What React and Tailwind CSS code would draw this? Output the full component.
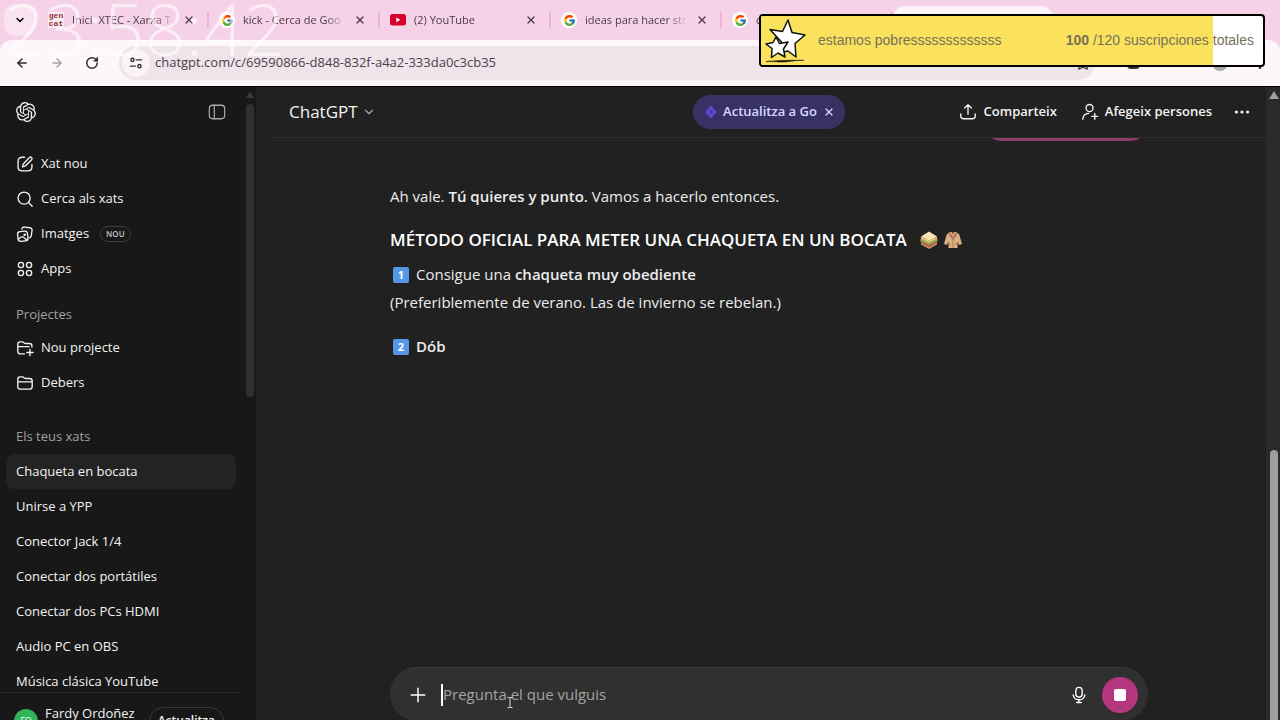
import { useState } from 'react';
import { ArrowLeft, ArrowRight, ChevronDown, MoreVertical, RotateCw, Star, X } from 'lucide-react';
import { FcGoogle } from 'react-icons/fc';

const TABS = [
  { id: 1, icon: 'gencat', title: 'Inici. XTEC - Xarxa T' },
  { id: 2, icon: 'google', title: 'kick - Cerca de Goo' },
  { id: 3, icon: 'youtube', title: '(2) YouTube' },
  { id: 4, icon: 'google', title: 'ideas para hacer str' },
  { id: 5, icon: 'google', title: 'c' },
];

const CHATS = [
  'Chaqueta en bocata',
  'Unirse a YPP',
  'Conector Jack 1/4',
  'Conectar dos portátiles',
  'Conectar dos PCs HDMI',
  'Audio PC en OBS',
  'Música clásica YouTube',
];

function Icon({ children, className = 'size-[18px]', strokeWidth = 1.5 }) {
  return (
    <svg
      viewBox="0 0 20 20"
      className={`shrink-0 ${className}`}
      fill="none"
      stroke="currentColor"
      strokeWidth={strokeWidth}
      strokeLinecap="round"
      strokeLinejoin="round"
      aria-hidden="true"
    >
      {children}
    </svg>
  );
}

const EditIcon = () => (
  <Icon>
    <path d="M9.5 2.5H7C4.3 2.5 2.3 4.3 2.3 7v6c0 2.7 1.9 4.7 4.7 4.7h6c2.7 0 4.7-2 4.7-4.7v-2.5" />
    <path d="M15 2.8a1.7 1.7 0 0 1 2.4 2.4L11.2 11.4a5 5 0 0 1-2 1.2l-2 .5.5-2a5 5 0 0 1 1.2-2z" />
  </Icon>
);

const SearchIcon = () => (
  <Icon>
    <circle cx="9" cy="9" r="6.7" />
    <path d="m14 14 4 4" />
  </Icon>
);

const ImagesIcon = () => (
  <Icon>
    <rect x="2" y="7" width="11" height="11" rx="3" transform="rotate(-6 7.5 12.5)" />
    <path d="M6.5 4.5c.3-1.6 1.6-2.4 3-2.2l6 .8c1.6.2 2.5 1.5 2.3 3l-.9 6c-.2 1.2-.9 2-2.1 2.2" />
    <path d="m3 15.5 2.6-2.2c.7-.6 1.5-.5 2.2 0l4.5 3.6" />
    <circle cx="9.6" cy="10.8" r=".7" fill="currentColor" />
  </Icon>
);

const AppsIcon = () => (
  <Icon>
    <circle cx="5.5" cy="5.5" r="2.9" />
    <circle cx="14.5" cy="5.5" r="2.9" />
    <circle cx="5.5" cy="14.5" r="2.9" />
    <circle cx="14.5" cy="14.5" r="2.9" />
  </Icon>
);

const NewFolderIcon = () => (
  <Icon>
    <path d="M9.5 16.5H5c-1.7 0-3-1.1-3-3V5.8C2 4.2 3 3.2 4.6 3.2h2.2c.7 0 1.3.2 1.8.7l.6.5c.5.4 1 .6 1.7.6H15c1.6 0 2.7 1 2.7 2.7v1.3M2 8.5h12.5M15.5 11.5v7M12 15h7" />
  </Icon>
);

const FolderIcon = () => (
  <Icon>
    <path d="M2 6c0-1.7 1-2.8 2.6-2.8h2.2c.7 0 1.3.2 1.8.7l.6.5c.5.4 1 .6 1.7.6H15c1.8 0 3 1 3 2.7v6.100c0 1.9-1.2 3-3 3H5c-1.8 0-3-1.1-3-3zM2 8.8h16" />
  </Icon>
);

const OpenAILogo = () => (
  <svg viewBox="0 0 24 24" className="size-5" fill="currentColor" aria-hidden="true">
    <path d="M22.2819 9.8211a5.9847 5.9847 0 0 0-.5157-4.9108 6.0462 6.0462 0 0 0-6.5098-2.9A6.0651 6.0651 0 0 0 4.9807 4.1818a5.9847 5.9847 0 0 0-3.9977 2.9 6.0462 6.0462 0 0 0 .7427 7.0966 5.98 5.98 0 0 0 .511 4.9107 6.051 6.051 0 0 0 6.5146 2.9001A5.9847 5.9847 0 0 0 13.2599 24a6.0557 6.0557 0 0 0 5.7718-4.2058 5.9894 5.9894 0 0 0 3.9977-2.9001 6.0557 6.0557 0 0 0-.7475-7.0729zm-9.022 12.6081a4.4755 4.4755 0 0 1-2.8764-1.0408l.1419-.0804 4.7783-2.7582a.7948.7948 0 0 0 .3927-.6813v-6.7369l2.02 1.1686a.071.071 0 0 1 .038.052v5.5826a4.504 4.504 0 0 1-4.4945 4.4944zm-9.6607-4.1254a4.4708 4.4708 0 0 1-.5346-3.0137l.142.0852 4.783 2.7582a.7712.7712 0 0 0 .7806 0l5.8428-3.3685v2.3324a.0804.0804 0 0 1-.0332.0615L9.74 19.9502a4.4992 4.4992 0 0 1-6.1408-1.6464zM2.3408 7.8956a4.485 4.485 0 0 1 2.3655-1.9728V11.6a.7664.7664 0 0 0 .3879.6765l5.8144 3.3543-2.0201 1.1685a.0757.0757 0 0 1-.071 0l-4.8303-2.7865A4.504 4.504 0 0 1 2.3408 7.872zm16.5963 3.8558L13.1038 8.364 15.1192 7.2a.0757.0757 0 0 1 .071 0l4.8303 2.7913a4.4944 4.4944 0 0 1-.6765 8.1042v-5.6772a.79.79 0 0 0-.407-.667zm2.0107-3.0231l-.142-.0852-4.7735-2.7818a.7759.7759 0 0 0-.7854 0L9.409 9.2297V6.8974a.0662.0662 0 0 1 .0284-.0615l4.8303-2.7866a4.4992 4.4992 0 0 1 6.6802 4.66zM8.3065 12.863l-2.02-1.1638a.0804.0804 0 0 1-.038-.0567V6.0742a4.4992 4.4992 0 0 1 7.3757-3.4537l-.142.0805L8.704 5.459a.7948.7948 0 0 0-.3927.6813zm1.0976-2.3654l2.602-1.4998 2.6069 1.4998v2.9994l-2.5974 1.4997-2.6067-1.4997Z" />
  </svg>
);

function Favicon({ icon }) {
  if (icon === 'youtube') {
    return (
      <svg viewBox="0 0 16 12" className="w-4 shrink-0" aria-hidden="true">
        <rect width="16" height="11.5" rx="2.5" fill="#d6002f" />
        <path d="M6.3 3.4v4.8l4-2.4z" fill="#fff" />
      </svg>
    );
  }
  if (icon === 'gencat') {
    return (
      <span className="flex size-4 shrink-0 flex-col items-center justify-center bg-white/60 font-['Liberation_Mono',monospace] text-[8px] leading-2 font-bold text-[#8f3036]">
        <span>gen</span>
        <span>cat</span>
      </span>
    );
  }
  return (
    <span className="flex size-4 shrink-0 items-center justify-center rounded-full bg-white">
      <FcGoogle className="size-[13px]" />
    </span>
  );
}

function BrowserBar() {
  return (
    <header className="shrink-0 bg-[#f6d2e8] text-[#4b3a45]">
      <div className="flex h-10 items-center">
        <button aria-label="Cerca pestanyes" className="mr-0.5 ml-1 flex size-8 shrink-0 items-center justify-center rounded-xl bg-[#fae3f1] text-black">
          <ChevronDown className="size-3" strokeWidth={3} />
        </button>
        {TABS.map((tab) => (
          <div key={tab.id} className="flex h-4 w-[171px] shrink-0 items-center gap-2 border-r-2 border-[#eeb0d6] pr-3 pl-[10px]">
            <Favicon icon={tab.icon} />
            <span className="flex-1 overflow-hidden mask-r-from-80% text-[11px] leading-4 whitespace-nowrap">{tab.title}</span>
            <button aria-label="Tanca la pestanya">
              <X className="size-3" strokeWidth={2.5} />
            </button>
          </div>
        ))}
        <div className="mt-[6px] w-40 self-stretch rounded-t-xl bg-[#fdf3f9]" />
      </div>
      <div className="flex h-[46px] items-center rounded-t-xl bg-[#fdf6fa] pr-3 pb-px pl-[15px]">
        <div className="flex items-center gap-[21px] text-[#2d2529]">
          <button aria-label="Enrere"><ArrowLeft className="size-[14px]" strokeWidth={2.5} /></button>
          <button aria-label="Endavant" className="text-[#aaa0a6]"><ArrowRight className="size-[14px]" strokeWidth={2.5} /></button>
          <button aria-label="Actualitza"><RotateCw className="size-[14px]" strokeWidth={2.5} /></button>
        </div>
        <div className="ml-5 flex h-[34px] flex-1 items-center rounded-full bg-[#f0e4eb] pr-1 pl-[3px]">
          <span className="flex size-7 items-center justify-center rounded-full bg-[#fbf3f8] text-[#333]">
            <Icon className="size-[14px]" strokeWidth={2}>
              <circle cx="5" cy="5.5" r="2.3" />
              <path d="M10.5 5.5H18M2 14.5h7" />
              <circle cx="15" cy="14.5" r="2.3" />
            </Icon>
          </span>
          <input
            aria-label="Adreça"
            className="ml-[5px] flex-1 bg-transparent text-[13px] text-[#4b4248] outline-none"
            defaultValue="chatgpt.com/c/69590866-d848-832f-a4a2-333da0c3cb35"
          />
          <Star className="size-4" />
        </div>
        <div className="flex items-center gap-6 pl-8 text-[#333]">
          <span className="mr-12 h-3 w-[13px] rounded-sm bg-current" />
          <span className="size-4 rounded-full bg-[#aaa]" />
          <MoreVertical className="size-4" />
        </div>
      </div>
    </header>
  );
}

function SidebarRow({ icon, label, badge }) {
  return (
    <a href="#" className="flex h-[35px] items-center gap-[7px] px-2.5">
      {icon}
      <span>{label}</span>
      {badge && (
        <span className="ml-1 rounded-full border border-[#3d3d3d] px-[5px] text-[8px] leading-[14px] font-semibold text-[#c4c4c4]">{badge}</span>
      )}
    </a>
  );
}

function Sidebar() {
  const [active, setActive] = useState(CHATS[0]);

  return (
    <aside className="flex w-64 shrink-0 flex-col bg-[#181818] text-[13px] text-[#f3f3f3]">
      <div className="flex min-h-0 flex-1">
        <div className="min-w-0 flex-1 overflow-hidden pr-[7px] pl-1.5">
          <div className="flex h-[50px] items-center justify-between px-2.5">
            <OpenAILogo />
            <button aria-label="Tanca la barra lateral" className="text-[#a5a5a5]">
              <Icon className="size-[18px]" strokeWidth={1.4}>
                <rect x="1.5" y="2.5" width="17" height="15" rx="3.5" />
                <path d="M7 2.5v15" />
              </Icon>
            </button>
          </div>

          <nav className="mt-[9px]">
            <SidebarRow icon={<EditIcon />} label="Xat nou" />
            <SidebarRow icon={<SearchIcon />} label="Cerca als xats" />
            <SidebarRow icon={<ImagesIcon />} label="Imatges" badge="NOU" />
            <SidebarRow icon={<AppsIcon />} label="Apps" />
          </nav>

          <h2 className="mt-[14px] h-[30px] px-2.5 leading-7 text-[#a0a0a0]">Projectes</h2>
          <SidebarRow icon={<NewFolderIcon />} label="Nou projecte" />
          <SidebarRow icon={<FolderIcon />} label="Debers" />

          <h2 className="mt-5 h-[34px] px-2.5 leading-8 text-[#a0a0a0]">Els teus xats</h2>
          <ul>
            {CHATS.map((chat) => (
              <li key={chat}>
                <button
                  onClick={() => setActive(chat)}
                  className={`flex h-[35px] w-full items-center rounded-lg px-2.5 ${active === chat ? 'bg-[#232323]' : ''}`}
                >
                  {chat}
                </button>
              </li>
            ))}
          </ul>
        </div>

        {/* Scrollbar */}
        <div className="flex w-[13px] flex-col items-center gap-1.5 pt-1">
          <svg viewBox="0 0 8 7" className="w-2" aria-hidden="true"><path d="M4 0 8 7H0z" fill="#383838" /></svg>
          <div className="h-[293px] w-2 rounded-full bg-[#303030]" />
        </div>
      </div>

      <div className="mr-4 -mb-7 flex h-14 shrink-0 items-center border-t border-[#2b2b2b] pl-3.5">
        <span className="flex size-6 items-center justify-center rounded-full bg-[#2fb457] text-[9px] text-white">FO</span>
        <div className="ml-[7px] flex-1 leading-4">
          <p>Fardy Ordoñez</p>
          <p className="text-xs text-[#a0a0a0]">Gratuït</p>
        </div>
        <button className="mr-4 h-7 rounded-full border border-[#3a3a3a] px-2 text-xs font-semibold">Actualitza</button>
      </div>
    </aside>
  );
}

function ChatHeader() {
  return (
    <div className="grid h-[51px] shrink-0 grid-cols-[1fr_auto_1fr] items-center border-b border-[#2c2c2c] px-4 text-[13px] font-semibold text-[#f3f3f3]">
      <button className="flex items-center gap-1 justify-self-start pl-px text-[17px] font-normal">
        ChatGPT
        <ChevronDown className="size-[14px] text-[#aaa]" />
      </button>
      <div className="flex h-[34px] items-center gap-1 rounded-full bg-[#383163] px-2.5 text-[#dcd7fb]">
        <svg viewBox="0 0 14 14" className="size-4" aria-hidden="true">
          <path d="M7 1.800c.5 0 .8.200 1.100.5L11.500 6.400c.3.400.3.800 0 1.200l-3.400 4.100c-.6.700-1.600.7-2.200 0L2.500 7.600c-.3-.4-.3-.8 0-1.200l3.400-4.100c.3-.3.6-.5 1.100-.5z" fill="#5b48cf" />
          <circle cx="7" cy="7" r="1.3" fill="#43369e" />
        </svg>
        <button>Actualitza a Go</button>
        <button aria-label="Descarta" className="ml-0.5"><X className="size-3" strokeWidth={2.5} /></button>
      </div>
      <div className="flex items-center justify-self-end">
        <button className="flex items-center gap-[7px]">
          <Icon>
            <path d="M10 12.5V2M6.3 5.500 10 1.800l3.700 3.700M2 12v2.500c0 1.800 1.200 3 3 3h10c1.800 0 3-1.200 3-3V12" />
          </Icon>
          Comparteix
        </button>
        <button className="ml-6 flex items-center gap-[6px]">
          <Icon>
            <circle cx="9.5" cy="5.6" r="3.9" />
            <path d="M2 18c.3-4 2.700-6.300 6.500-6.500M15.300 11.500v6.500M12 14.800h6.500" />
          </Icon>
          Afegeix persones
        </button>
        <button aria-label="Més opcions" className="ml-[22px]">
          <svg viewBox="0 0 20 20" className="size-4" fill="currentColor" aria-hidden="true">
            <circle cx="3" cy="10" r="2" />
            <circle cx="10" cy="10" r="2" />
            <circle cx="17" cy="10" r="2" />
          </svg>
        </button>
      </div>
    </div>
  );
}

function Keycap({ n }) {
  return (
    <span className="mr-[7px] ml-[3px] inline-flex size-4 items-center justify-center rounded-[2px] bg-[#5598e8] align-[1px] text-[11px] leading-4 font-bold text-white">
      {n}
    </span>
  );
}

const Sandwich = () => (
  <svg viewBox="0 0 20 20" className="size-5" aria-hidden="true">
    <path d="m2 12 8 4.5 8-4.5v2.5L10 19l-8-4.5z" fill="#c58b62" />
    <path d="m1.5 10 8.5 4.5 8.5-4.5v2L10 16.7 1.5 12z" fill="#b75a4a" />
    <path d="m1.5 8.5 8.5 4 8.5-4v2.200L10 15l-8.500-4.300z" fill="#83ad48" />
    <path d="m2 6.5 8 4 8-4v2.500l-8 4-8-4z" fill="#e6bd72" />
    <path d="m10 1.5 8 5-8 4.300-8-4.300z" fill="#f8e3b4" />
  </svg>
);

const Coat = () => (
  <svg viewBox="0 0 20 20" className="size-5" aria-hidden="true">
    <path d="M7 2h6l3.300 2.500L19 14l-3 1-1.500-3.500V18h-9v-6.500L4 15l-3-1 2.700-9.500z" fill="#dcae83" />
    <path d="m7 2 3 5 3-5 1 3-4 5-4-5z" fill="#ad7657" />
    <path d="M10 9v9M5.500 14h2.500M12 14h2.500" stroke="#a6734f" strokeWidth=".8" />
    <path d="M8.500 1.800h3L10 4.800z" fill="#7d4a36" />
  </svg>
);

function Conversation() {
  return (
    <div className="min-h-0 flex-1 overflow-hidden">
      <article className="mx-auto max-w-[758px] text-[15px] leading-7 text-[#ececec]">
        <div className="-mt-[33px] mr-px ml-auto h-9 w-[162px] rounded-2xl bg-[#8d3c6c]" />
        <p className="mt-[41px]">
          Ah vale. <strong className="font-semibold">Tú quieres y punto.</strong> Vamos a hacerlo entonces.
        </p>
        <h1 className="mt-4 flex items-center gap-1 text-[17px] leading-7 font-semibold text-white">
          <span className="mr-2">MÉTODO OFICIAL PARA METER UNA CHAQUETA EN UN BOCATA</span>
          <Sandwich />
          <Coat />
        </h1>
        <p className="mt-[6px]">
          <Keycap n="1" />
          Consigue una <strong className="font-semibold">chaqueta muy obediente</strong>
          <br />
          (Preferiblemente de verano. Las de invierno se rebelan.)
        </p>
        <p className="mt-4">
          <Keycap n="2" />
          <strong className="font-semibold">Dób</strong>
        </p>
      </article>
    </div>
  );
}

function Composer() {
  const [text, setText] = useState('');

  return (
    <form
      onSubmit={(e) => e.preventDefault()}
      className="relative mx-auto -mb-px flex h-[54px] w-full max-w-[758px] shrink-0 items-center rounded-full border-t border-[#393939] bg-[#303030] pr-[10px] pl-[19px] text-white"
    >
      <button type="button" aria-label="Afegeix fitxers">
        <Icon className="size-[18px]" strokeWidth={1.6}><path d="M10 2.5v15M2.5 10h15" /></Icon>
      </button>
      <span className="ml-[14px] h-[22px] w-0.5 bg-white" />
      <input
        aria-label="Pregunta el que vulguis"
        placeholder="Pregunta el que vulguis"
        value={text}
        onChange={(e) => setText(e.target.value)}
        className="min-w-0 flex-1 bg-transparent text-[15px] outline-none placeholder:text-[#a3a3a3]"
      />
      <button type="button" aria-label="Dicta" className="mr-[14px]">
        <Icon>
          <rect x="6.5" y="1.5" width="7" height="11" rx="3.5" />
          <path d="M3.5 10c.5 3.3 3 5.3 6.5 5.3s6-2 6.5-5.3M10 15.5V18M7.5 18.3h5" />
        </Icon>
      </button>
      <button type="button" aria-label="Atura" className="flex size-9 items-center justify-center rounded-full bg-[#b3367f]">
        <span className="size-3 rounded-[2px] bg-white" />
      </button>

      {/* Text pointer */}
      <svg viewBox="0 0 6 11" className="absolute top-[29px] left-[117px] w-1.5" fill="none" stroke="#ddd" aria-hidden="true">
        <path d="M.5.5h2l.5.5.5-.5h2M3 1v9M.5 10.5h2l.5-.5.5.5h2" />
      </svg>
    </form>
  );
}

function GoalWidget() {
  return (
    <div className="absolute top-[14px] right-[15px] h-[53px] w-[506px] overflow-hidden rounded border-2 border-black bg-white">
      <div className="h-full w-[90%] bg-[#fae25c]" />
      <div className="absolute inset-0 flex items-center pr-[9px] pl-1 font-['Liberation_Sans',sans-serif] text-[14px] text-[#79705a]">
        <svg viewBox="0 0 42 44" className="w-[42px] shrink-0" fill="#fff" stroke="#111" strokeWidth="1.5" strokeLinejoin="round" aria-hidden="true">
          <path d="m23 1 4 12.5L40 16l-10 8.5L31 38l-8-6-9 2 2.5-11L5 10.500l12.500 2z" />
          <path d="m11 18 3.500 6.500L23 23l-4.500 7L20 38l-7-4-6.500 4.500.5-9L1 25l7-1.500z" />
          <path d="M1 42.500c10-1 26-1.500 38-1.200-12 .2-15 1.700-22 1.700s-9-.7-16-.5z" fill="#111" strokeWidth=".5" />
        </svg>
        <span className="ml-[11px]">estamos pobresssssssssssss</span>
        <span className="ml-auto"><b>100</b> /120 suscripciones totales</span>
      </div>
    </div>
  );
}

export default function App() {
  return (
    <div className="relative flex h-screen flex-col overflow-hidden bg-[#212121] font-['Open_Sans','Noto_Sans',sans-serif]">
      <BrowserBar />

      <div className="flex min-h-0 flex-1 border-t border-black">
        <Sidebar />
        <main className="ml-4 flex min-w-0 flex-1 flex-col">
          <ChatHeader />
          <Conversation />
          <Composer />
        </main>
        <div className="flex w-[14px] shrink-0 flex-col items-center justify-between bg-[#2a2a2a] pt-1 pl-0.5">
          <svg viewBox="0 0 10 8" className="w-2.5" aria-hidden="true"><path d="M5 0 10 8H0z" fill="#a0a0a0" /></svg>
          <div className="h-[43%] w-2 rounded-t-full bg-[#9f9f9f]" />
        </div>
      </div>

      {/* Stream overlays */}
      <time className="pointer-events-none absolute -top-3.5 left-1 text-[72px] leading-[84px] font-light text-white/60">
        23:58:42
      </time>
      <GoalWidget />
    </div>
  );
}
